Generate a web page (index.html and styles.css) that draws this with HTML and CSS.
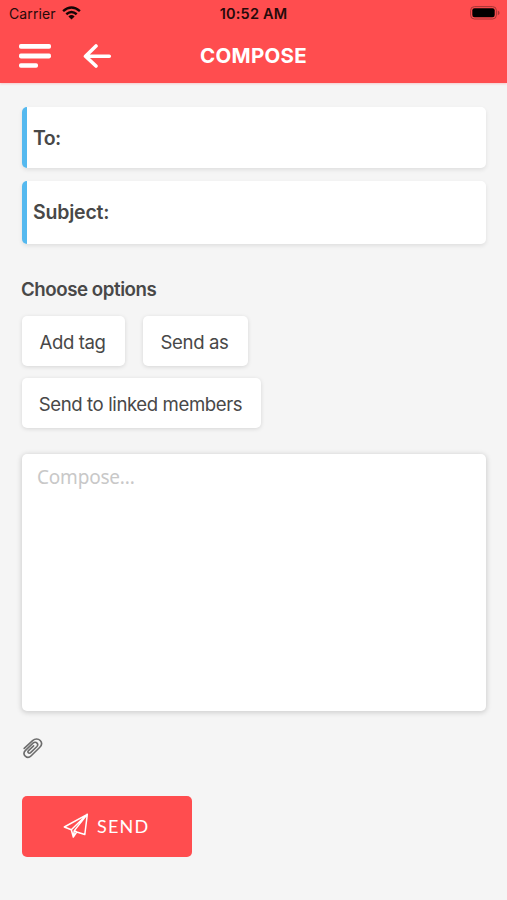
FILE: index.html
```html
<!DOCTYPE html>
<html lang="en">
<head>
<meta charset="utf-8">
<meta name="viewport" content="width=device-width, initial-scale=1">
<title>Compose</title>
<link rel="stylesheet" href="styles.css">
</head>
<body>
<header class="header">
  <div class="status">
    <div class="carrier"><span class="carrier-name">Carrier</span>
      <svg width="19" height="14" viewBox="0 0 19 14" fill="none" stroke="#160606" stroke-width="2.5"><path d="M1.1 5.1Q9.5 -2.1 17.9 5.1M4.3 8.2Q9.5 3.8 14.7 8.2"/><path d="M6.4 10.5Q9.5 7.7 12.6 10.5L9.5 13.6z" fill="#160606" stroke="none"/></svg>
    </div>
    <div class="time">10:52 AM</div>
    <svg class="battery" width="31" height="14" viewBox="0 0 31 14"><rect x=".6" y=".6" width="25.8" height="12.4" rx="3.8" fill="none" stroke="#a63535"/><rect x="2.3" y="2.3" width="22.4" height="9" rx="2.2" fill="#000"/><path d="M27.8 4.6v4.6q1.8-.8 1.8-2.3t-1.8-2.3z" fill="#a63535"/></svg>
  </div>
  <nav class="bar">
    <div class="bar-icons">
      <svg width="32" height="25" viewBox="0 0 32 25" fill="#fff"><rect width="32" height="4.8" rx="1.8"/><rect y="9.6" width="32" height="4.8" rx="1.8"/><rect y="19.2" width="19" height="4.6" rx="1.8"/></svg>
      <svg width="29" height="25" viewBox="0 0 29 25" fill="none" stroke="#fff" stroke-width="3.6" stroke-linecap="round" stroke-linejoin="round"><path d="M13 2L2.5 12.2L13 22M3 12.2H26.3"/></svg>
    </div>
    <h1 class="title">COMPOSE</h1>
  </nav>
</header>
<main class="main">
  <div class="field field-to"><span class="label-to">To:</span></div>
  <div class="field field-subject"><span class="label-subject">Subject:</span></div>
  <h2 class="heading">Choose options</h2>
  <div class="options">
    <button class="option add-tag">Add tag</button>
    <button class="option send-as">Send as</button>
    <button class="option linked">Send to linked members</button>
  </div>
  <div class="editor">Compose...</div>
  <svg class="clip" width="20" height="21" viewBox="0 0 20 21" fill="none" stroke="#6c6c6c" stroke-width="1.6" stroke-linecap="round"><path d="M1.2 10.4L9.6 2.6C12 .4 15.4.5 17.2 2.5C19.2 4.7 18.8 7.4 16.6 9.5L8.2 17.8C6.4 19.6 3.9 19.7 2.3 18.2C.6 16.5.7 14.2 2.5 12.4L10 5.2C11.3 4 13 4 14 5.1C15 6.2 14.9 7.6 13.7 8.8L7.6 14.6C6.8 15.4 5.8 15.4 5.3 14.8C4.7 14.1 4.8 13.3 5.5 12.6L10.6 7.8"/></svg>
  <button class="send">
    <svg width="26" height="26" viewBox="0 0 26 26" fill="none" stroke="#fff" stroke-width="1.5" stroke-linejoin="round"><path d="M24.3 1.3L1.3 14L8.3 16.7L10.3 24L13.7 19L21.8 21.5zM24.3 1.3L8.3 16.7M24.3 1.3L11.3 17.6L10.3 24M11.3 17.6L13.7 19"/></svg>
    <span class="send-text">SEND</span>
  </button>
</main>
</body>
</html>
```
FILE: styles.css
```css
* { box-sizing: border-box; }
body {
  margin: 0;
  height: 900px;
  background: #f5f5f5;
  color: #484848;
  font-family: Inter, "Liberation Sans", sans-serif;
}
svg { display: block; flex: none; }
button { border: 0; font: inherit; color: inherit; }
.header {
  height: 82.5px;
  background: #ff4d4f;
  box-shadow: 0 1px 2px rgba(255, 77, 79, .25);
}
.status {
  height: 28px;
  display: grid;
  grid-template-columns: 1fr auto 1fr;
  align-items: center;
  padding: 0 6px 0 9px;
  color: #260a0a;
}
.carrier { display: flex; gap: 6px; align-items: center; font-size: 14px; }
.carrier svg { margin-top: -2px; }
.carrier-name { margin-top: -2px; letter-spacing: .1px; }
.time { margin: -2px 3px 0 0; font-size: 14.5px; font-weight: 600; letter-spacing: .2px; }
.battery { justify-self: end; margin-top: -2px; }
.bar {
  height: 54px;
  display: grid;
  grid-template-columns: 1fr auto 1fr;
  align-items: center;
  padding: 2px 0 0;
}
.bar-icons { display: flex; align-items: center; gap: 32px; padding-left: 19px; }
.title { margin: 0; font: 700 20.5px/28px Inter, sans-serif; letter-spacing: .3px; color: #fff; }
.main { padding: 24.5px 21px 0 22px; }
.field {
  display: flex;
  align-items: center;
  height: 61px;
  padding-left: 6px;
  border-left: 5px solid #55b9ef;
  border-radius: 5px;
  background: #fff;
  box-shadow: 0 2px 4px rgba(0, 0, 0, .09);
  font-size: 19.5px;
  font-weight: 600;
  letter-spacing: -.2px;
}
.field-to { padding-top: 1px; letter-spacing: -.6px; }
.field-subject { height: 63px; margin-top: 12.5px; }
.label-subject { margin-top: -1px; }
.heading { margin: 33px 0 0 -1px; font-size: 18.7px; line-height: 26px; font-weight: 600; letter-spacing: -.45px; }
.options { display: flex; flex-wrap: wrap; gap: 12px 18px; margin-top: 13px; }
.option {
  height: 50px;
  padding: 2px 2px 0 0;
  border-radius: 5px;
  background: #fff;
  box-shadow: 0 1px 4px rgba(0, 0, 0, .13);
  font-size: 18.6px;
  letter-spacing: -.4px;
  white-space: nowrap;
}
.add-tag { width: 103px; }
.send-as { width: 105px; }
.linked { width: 239px; }
.editor {
  height: 257px;
  margin-top: 26px;
  padding: 10px 15px;
  border-radius: 5px;
  background: #fff;
  box-shadow: 0 1px 5px 1px rgba(0, 0, 0, .15);
  font: 19px/26px "Noto Sans", sans-serif;
  letter-spacing: -.2px;
  color: #c8c8c8;
}
.clip { margin: 27px 0 0 1px; }
.send {
  display: flex;
  align-items: center;
  gap: 8px;
  width: 170px;
  height: 61px;
  margin-top: 37px;
  padding: 0 0 0 41px;
  border-radius: 5px;
  background: #ff4d4f;
  color: #fff;
}
.send-text { font: 400 18px/24px Lato, sans-serif; letter-spacing: 1.2px; }
```
